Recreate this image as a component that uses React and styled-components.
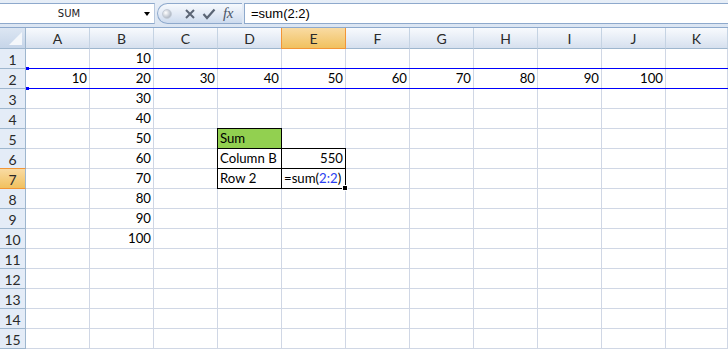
import React from "react";
import styled, { createGlobalStyle, css } from "styled-components";

const Global = createGlobalStyle`
  html, body { margin: 0; padding: 0; background: #fff; }
  body { font-family: Lato, "Liberation Sans", sans-serif; overflow: hidden; }
`;

const COLS = ["A", "B", "C", "D", "E", "F", "G", "H", "I", "J", "K"];
const ROWS = Array.from({ length: 15 }, (_, i) => i + 1);

// cell contents: key "B1" -> { v, text, fill, boxed }
const cells = {
  B1: { v: 10 },
  A2: { v: 10 }, B2: { v: 20 }, C2: { v: 30 }, D2: { v: 40 }, E2: { v: 50 },
  F2: { v: 60 }, G2: { v: 70 }, H2: { v: 80 }, I2: { v: 90 }, J2: { v: 100 },
  B3: { v: 30 }, B4: { v: 40 }, B5: { v: 50 }, B6: { v: 60 },
  B7: { v: 70 }, B8: { v: 80 }, B9: { v: 90 }, B10: { v: 100 },
  D5: { v: "Sum", text: true, fill: "#92d050", boxed: true },
  D6: { v: "Column B", text: true, boxed: true },
  E6: { v: 550, boxed: true },
  D7: { v: "Row 2", text: true, boxed: true },
  E7: { editing: true, boxed: true },
};

const Window = styled.div`
  width: 728px;
  height: 349px;
  overflow: hidden;
  display: flex;
  flex-direction: column;
`;

const FormulaBar = styled.div`
  height: 28px;
  box-sizing: border-box;
  padding: 3px 0 3px;
  display: flex;
  align-items: stretch;
  gap: 2px;
  background: linear-gradient(#e7eef7, #dbe5f2);
  border-bottom: 1px solid #8ea9cc;
`;

const NameBox = styled.div`
  width: 155px;
  box-sizing: border-box;
  background: #fff;
  border-top: 1px solid #8ea9cc;
  border-bottom: 1px solid #8ea9cc;
  border-right: 1px solid #b7c8de;
  position: relative;
  display: flex;
  align-items: center;
  justify-content: center;
  font-family: "DejaVu Sans", sans-serif;
  font-size: 10px;
  color: #1b1b1b;
  padding-right: 20px;
  padding-left: 4px;
`;

const Arrow = styled.span`
  position: absolute;
  right: 4px;
  top: 8px;
  width: 0;
  height: 0;
  border-left: 3px solid transparent;
  border-right: 3px solid transparent;
  border-top: 4px solid #000;
`;

const FxGroup = styled.div`
  width: 85px;
  box-sizing: border-box;
  border: 1px solid #8ea9cc;
  border-right: none;
  border-radius: 11px 0 0 11px;
  background: linear-gradient(#f6f9fd, #e1e9f5 55%, #cddbee);
  display: flex;
  align-items: center;
  padding-left: 4px;
  gap: 6px;
`;

const Dot = styled.span`
  width: 8px;
  height: 8px;
  border-radius: 50%;
  background: radial-gradient(circle at 35% 35%, #ffffff, #b4bcc8 70%);
  border: 1px solid #c4ccd7;
  margin-right: 6px;
`;

const Fx = styled.span`
  font-family: "Liberation Serif", serif;
  font-style: italic;
  font-size: 15px;
  color: #4a5566;
  letter-spacing: -0.5px;
  margin-left: 1px;
`;

const FormulaInput = styled.div`
  flex: 1;
  background: #fff;
  border: 1px solid #8ea9cc;
  border-right: none;
  display: flex;
  align-items: center;
  padding-left: 6px;
  font-family: "Liberation Sans", sans-serif;
  font-size: 13px;
  color: #000;
`;

const Sheet = styled.div`
  display: grid;
  grid-template-columns: 26px repeat(10, 64px) 1fr;
  grid-template-rows: 21px;
  grid-auto-rows: 20px;
  position: relative;
  font-size: 13.2px;
`;

const headerBase = css`
  box-sizing: border-box;
  display: flex;
  align-items: center;
  justify-content: center;
  color: #2a2a2a;
  font-size: 14px;
  border-right: 1px solid #9eb6ce;
  border-bottom: 1px solid #9eb6ce;
`;

const ColHead = styled.div`
  ${headerBase}
  background: ${(p) =>
    p.$active
      ? "linear-gradient(#f9dba3, #f1c15f)"
      : "linear-gradient(#f8fafd, #e4ebf5 60%, #d6e0ee)"};
  ${(p) =>
    p.$active &&
    css`
      border: 1px solid #f29536;
      border-top: none;
      margin-left: -1px;
    `}
  border-right-color: ${(p) => (p.$active ? "#f29536" : "#c5d3e3")};
  border-bottom-color: ${(p) => (p.$active ? "#f29536" : "#9eb6ce")};
  padding-top: 1px;
`;

const Corner = styled.div`
  ${headerBase}
  background: linear-gradient(#dce6f3, #c6d5e9);
  position: relative;
  svg { position: absolute; right: 3px; bottom: 3px; }
`;

const RowHead = styled.div`
  ${headerBase}
  background: ${(p) =>
    p.$active ? "linear-gradient(#f9dba3, #f1c15f)" : "#e4ecf7"};
  border-bottom-color: ${(p) => (p.$active ? "#f29536" : "#9eb6ce")};
  ${(p) =>
    p.$active &&
    css`
      border-top: 1px solid #f29536;
      margin-top: -1px;
    `}
  padding-top: 1px;
`;

const Cell = styled.div`
  box-sizing: border-box;
  border-right: 1px solid #d0d7e5;
  border-bottom: 1px solid #d0d7e5;
  background: ${(p) => p.$fill || "#fff"};
  display: flex;
  align-items: flex-end;
  justify-content: ${(p) => (p.$text ? "flex-start" : "flex-end")};
  padding: 0 2px 1px 2px;
  line-height: 17px;
  color: #000;
  white-space: nowrap;
  position: relative;
  ${(p) =>
    p.$boxed &&
    css`
      &::after {
        content: "";
        position: absolute;
        inset: -1px;
        border: 1px solid #000;
        pointer-events: none;
        z-index: 1;
      }
    `}
`;

const Ref = styled.span`
  color: #2a3ef0;
`;

const FillHandle = styled.span`
  position: absolute;
  right: -3px;
  bottom: -3px;
  width: 4px;
  height: 4px;
  background: #000;
  border: 1px solid #fff;
  box-sizing: content-box;
  z-index: 3;
`;

const RangeMark = styled.div`
  grid-area: 3 / 2 / 4 / -1;
  position: absolute;
  top: -1px;
  bottom: 0;
  left: 0;
  right: 0;
  border-top: 1px solid #0000ff;
  border-bottom: 1px solid #0000ff;
  z-index: 2;
  pointer-events: none;
`;

const Handle = styled.span`
  position: absolute;
  left: 0;
  width: 3px;
  height: 3px;
  background: #0000ff;
  ${(p) => (p.$bottom ? "bottom: -2px;" : "top: -2px;")}
`;

const Icon = ({ children, w = 14, h = 14 }) => (
  <svg width={w} height={h} viewBox={`0 0 ${w} ${h}`}>
    {children}
  </svg>
);

export default function App() {
  return (
    <>
      <Global />
      <Window>
        <FormulaBar>
          <NameBox>
            SUM
            <Arrow />
          </NameBox>
          <FxGroup>
            <Dot />
            <Icon w={12} h={12}>
              <path d="M2 2 L10 10 M10 2 L2 10" stroke="#5b6575" strokeWidth="2" />
            </Icon>
            <Icon w={14} h={12}>
              <path d="M1.5 6 L5 10 L12.5 1.5" stroke="#5b6575" strokeWidth="2.2" fill="none" />
            </Icon>
            <Fx>fx</Fx>
          </FxGroup>
          <FormulaInput>=sum(2:2)</FormulaInput>
        </FormulaBar>
        <Sheet>
          <Corner>
            <svg width="13" height="13" viewBox="0 0 13 13">
              <polygon points="13,0 13,13 0,13" fill="#f4f7fb" />
            </svg>
          </Corner>
          {COLS.map((c) => (
            <ColHead key={c} $active={c === "E"}>
              {c}
            </ColHead>
          ))}
          {ROWS.map((r) => (
            <React.Fragment key={r}>
              <RowHead $active={r === 7}>{r}</RowHead>
              {COLS.map((c) => {
                const d = cells[c + r];
                if (!d) return <Cell key={c} />;
                return (
                  <Cell
                    key={c}
                    $text={d.text || d.editing}
                    $fill={d.fill}
                    $boxed={d.boxed}
                  >
                    {d.editing ? (
                      <>
                        <span>
                          =sum(<Ref>2:2</Ref>)
                        </span>
                        <FillHandle />
                      </>
                    ) : (
                      d.v
                    )}
                  </Cell>
                );
              })}
            </React.Fragment>
          ))}
          <RangeMark>
            <Handle />
            <Handle $bottom />
          </RangeMark>
        </Sheet>
      </Window>
    </>
  );
}
